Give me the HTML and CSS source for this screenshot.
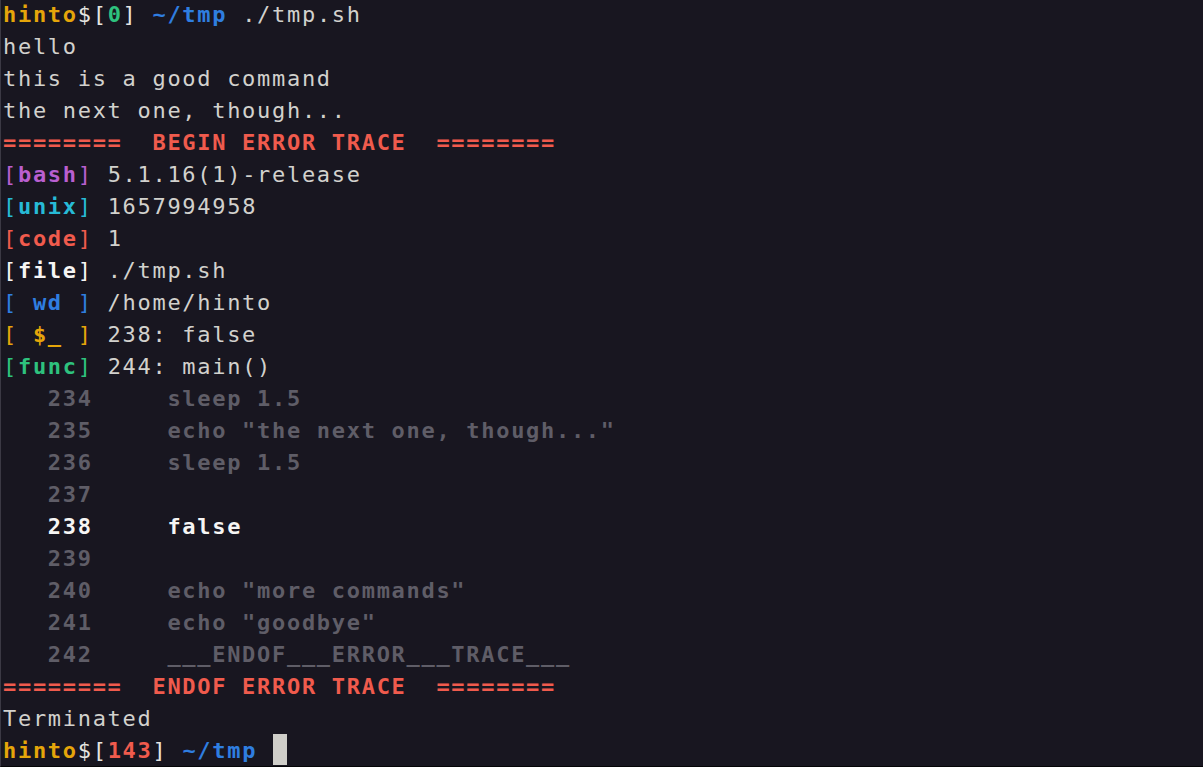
FILE: index.html
```html
<!DOCTYPE html>
<html>
<head>
<meta charset="utf-8">
<link rel="stylesheet" href="styles.css">
</head>
<body>
<div class="window">
<pre class="term"><span class="yel b">hinto</span><span class="fg">$[</span><span class="grn b">0</span><span class="fg">]</span> <span class="blu b">~/tmp</span> ./tmp.sh
hello
this is a good command
the next one, though...
<span class="red b">========  BEGIN ERROR TRACE  ========</span>
<span class="pur">[<b>bash</b>]</span> 5.1.16(1)-release
<span class="cya">[<b>unix</b>]</span> 1657994958
<span class="red">[<b>code</b>]</span> 1
<span class="wht">[<b>file</b>]</span> ./tmp.sh
<span class="blu">[ <b>wd</b> ]</span> /home/hinto
<span class="yel">[ <b>$_</b> ]</span> 238: false
<span class="grn">[<b>func</b>]</span> 244: main()
<span class="dim b">   234     sleep 1.5
   235     echo "the next one, though..."
   236     sleep 1.5
   237</span>
<span class="wht b">   238     false</span>
<span class="dim b">   239
   240     echo "more commands"
   241     echo "goodbye"
   242     ___ENDOF___ERROR___TRACE___</span>
<span class="red b">========  ENDOF ERROR TRACE  ========</span>
Terminated
<span class="yel b">hinto</span><span class="fg">$[</span><span class="red b">143</span><span class="fg">]</span> <span class="blu b">~/tmp</span> <span class="cursor"> </span></pre>
</div>
</body>
</html>
```
FILE: styles.css
```css
html, body {
  margin: 0;
  padding: 0;
  background: #181620;
}

.window {
  box-sizing: border-box;
  width: 1203px;
  height: 767px;
  overflow: hidden;
  background: #181620;
  border-left: 1px solid #3b3944;
  border-bottom: 1px solid #050507;
}

.term {
  margin: -1px 0 0 0;
  padding: 0 0 0 2px;
  font-family: "DejaVu Sans Mono", monospace;
  font-size: 22px;
  line-height: 32px;
  letter-spacing: 1.7px;
  color: #d2d1cd;
  white-space: pre;
}

.term b, .b { font-weight: bold; }

.fg  { color: #e6e5e1; }
.yel { color: #e5a50a; }
.grn { color: #2ec27e; }
.blu { color: #2f7ee0; }
.red { color: #f05b4d; }
.pur { color: #b95fd0; }
.cya { color: #27bad6; }
.wht { color: #f6f5f4; }
.dim { color: #5f5d67; }

.cursor {
  display: inline-block;
  width: 14px;
  height: 31px;
  vertical-align: top;
  margin-top: -1px;
  margin-left: 1px;
  background: #cfcec9;
}
```
